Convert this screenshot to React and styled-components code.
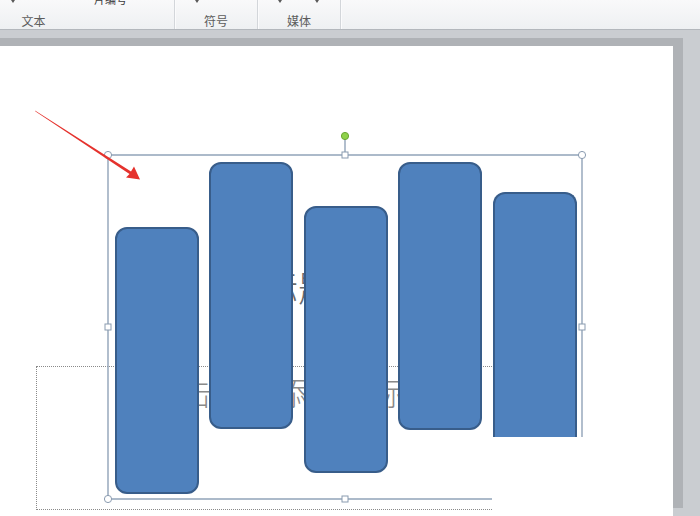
import React from "react";
import styled, { createGlobalStyle } from "styled-components";

const GlobalStyle = createGlobalStyle`
  html, body { margin: 0; padding: 0; }
  body {
    width: 700px; height: 516px; overflow: hidden;
    font-family: "Noto Sans CJK SC", "Noto Sans", sans-serif;
  }
  #root { width: 700px; height: 516px; }
`;

const Page = styled.div`
  display: flex;
  flex-direction: column;
  width: 700px;
  height: 516px;
  overflow: hidden;
`;

const Ribbon = styled.div`
  flex: 0 0 29px;
  display: flex;
  background: linear-gradient(#f9f9fa, #eef0f2);
  border-bottom: 1px solid #b3b7bc;
  overflow: hidden;
`;

const Group = styled.div`
  flex: 0 0 ${(p) => p.$width}px;
  margin-left: ${(p) => p.$offset || 0}px;
  display: flex;
  flex-direction: column;
  border-right: 1px solid #d3d6da;
  box-shadow: 1px 0 0 #fbfbfc;
`;

const Controls = styled.div`
  flex: 0 0 14px;
  display: flex;
  align-items: flex-start;
  padding-left: ${(p) => p.$pad}px;
`;

const Caret = styled.span`
  width: 0;
  height: 0;
  margin-left: ${(p) => p.$gap || 0}px;
  border-left: 2.5px solid transparent;
  border-right: 2.5px solid transparent;
  border-top: 3px solid #5a5a5a;
`;

const CutLabel = styled.span`
  margin-left: ${(p) => p.$gap || 0}px;
  margin-top: -7px;
  font-size: 11px;
  line-height: 13px;
  color: #3c3c3c;
  white-space: nowrap;
`;

const GroupLabel = styled.div`
  text-align: center;
  font-size: 12px;
  line-height: 14px;
  color: #5c5c5c;
`;

const Workspace = styled.div`
  flex: 1;
  display: flex;
  background: #cacdd1;
  padding: 16px 27px 0 0;
  overflow: hidden;
`;

const Slide = styled.div`
  flex: 1;
  margin-left: -20px;
  position: relative;
  background: #ffffff;
  box-shadow: 10px -8px 0 #afb2b6;
`;

const Placeholder = styled.div`
  position: absolute;
  left: ${(p) => p.$x + 20}px;
  top: ${(p) => p.$y - 46}px;
  width: ${(p) => p.$w}px;
  height: ${(p) => p.$h}px;
  box-sizing: border-box;
  border: 1px dotted #8a8a8a;
  border-right: none;
  padding: 4px 0 0 ${(p) => p.$pad}px;
`;

const PlaceholderText = styled.div`
  font-size: ${(p) => p.$size}px;
  font-weight: 300;
  line-height: 1.25;
  color: ${(p) => p.$color};
  white-space: nowrap;
`;

const FreeText = styled.div`
  position: absolute;
  left: ${(p) => p.$x + 20}px;
  top: ${(p) => p.$y - 46}px;
  font-size: ${(p) => p.$size}px;
  font-weight: 300;
  line-height: 1;
  color: ${(p) => p.$color};
  white-space: nowrap;
`;

const Bar = styled.div`
  position: absolute;
  left: ${(p) => p.$x + 20}px;
  top: ${(p) => p.$y - 46}px;
  width: 84px;
  height: ${(p) => p.$h}px;
  box-sizing: border-box;
  background: #4f81bd;
  border: 2px solid #385d8a;
  border-radius: 12px;
  ${(p) =>
    p.$clipped &&
    `
    border-bottom: none;
    border-bottom-left-radius: 0;
    border-bottom-right-radius: 0;
  `}
`;

const Overlay = styled.svg`
  position: absolute;
  left: 20px;
  top: 0;
  width: 700px;
  height: 470px;
  overflow: visible;
  pointer-events: none;
`;

const bars = [
  { x: 115, y: 227, h: 267 },
  { x: 209, y: 162, h: 267 },
  { x: 304, y: 206, h: 267 },
  { x: 398, y: 162, h: 268 },
  { x: 493, y: 192, h: 245, clipped: true },
];

function Handle({ x, y, round }) {
  return round ? (
    <circle cx={x} cy={y} r="3.6" fill="#fff" stroke="#8a9bb0" strokeWidth="1" />
  ) : (
    <rect x={x - 3} y={y - 3} width="6" height="6" fill="#fff" stroke="#8a9bb0" strokeWidth="1" />
  );
}

export default function App() {
  return (
    <>
      <GlobalStyle />
      <Page>
        <Ribbon>
          <Group $width={281} $offset={-107}>
            <Controls $pad={118}>
              <Caret />
              <CutLabel $gap={79}>片编号</CutLabel>
            </Controls>
            <GroupLabel>文本</GroupLabel>
          </Group>
          <Group $width={82}>
            <Controls $pad={20}>
              <Caret />
            </Controls>
            <GroupLabel>符号</GroupLabel>
          </Group>
          <Group $width={82}>
            <Controls $pad={20}>
              <Caret />
              <Caret $gap={33} />
            </Controls>
            <GroupLabel>媒体</GroupLabel>
          </Group>
        </Ribbon>
        <Workspace>
          <Slide>
            <FreeText $x={262} $y={268} $size={36} $color="#6a6a6a">标题</FreeText>
            <Placeholder $x={36} $y={366} $w={456} $h={144} $pad={111}>
              <PlaceholderText $size={32} $color="#8a8a8a">单击此处添加副标题</PlaceholderText>
            </Placeholder>
            {bars.map((b, i) => (
              <Bar key={i} $x={b.x} $y={b.y} $h={b.h} $clipped={b.clipped} />
            ))}
            <Overlay viewBox="0 0 700 470">
              <g transform="translate(0,-46)">
                <g stroke="#91a3b8" strokeWidth="1.4" fill="none">
                  <line x1="108" y1="155" x2="582" y2="155" />
                  <line x1="108" y1="155" x2="108" y2="499" />
                  <line x1="108" y1="499" x2="492" y2="499" />
                  <line x1="582" y1="155" x2="582" y2="437" />
                  <line x1="345" y1="137" x2="345" y2="155" />
                </g>
                <Handle x={108} y={155} round />
                <Handle x={582} y={155} round />
                <Handle x={108} y={499} round />
                <Handle x={345} y={155} />
                <Handle x={108} y={327} />
                <Handle x={582} y={327} />
                <Handle x={345} y={499} />
                <circle cx="345" cy="136" r="3.6" fill="#8fd24a" stroke="#6aa634" strokeWidth="1" />
                <polygon
                  fill="#e5322d"
                  points="35,110.6 35.5,111.4 129.5,174 126,177.6 140,179.5 134,166.5 131,171.6"
                />
              </g>
            </Overlay>
          </Slide>
        </Workspace>
      </Page>
    </>
  );
}
